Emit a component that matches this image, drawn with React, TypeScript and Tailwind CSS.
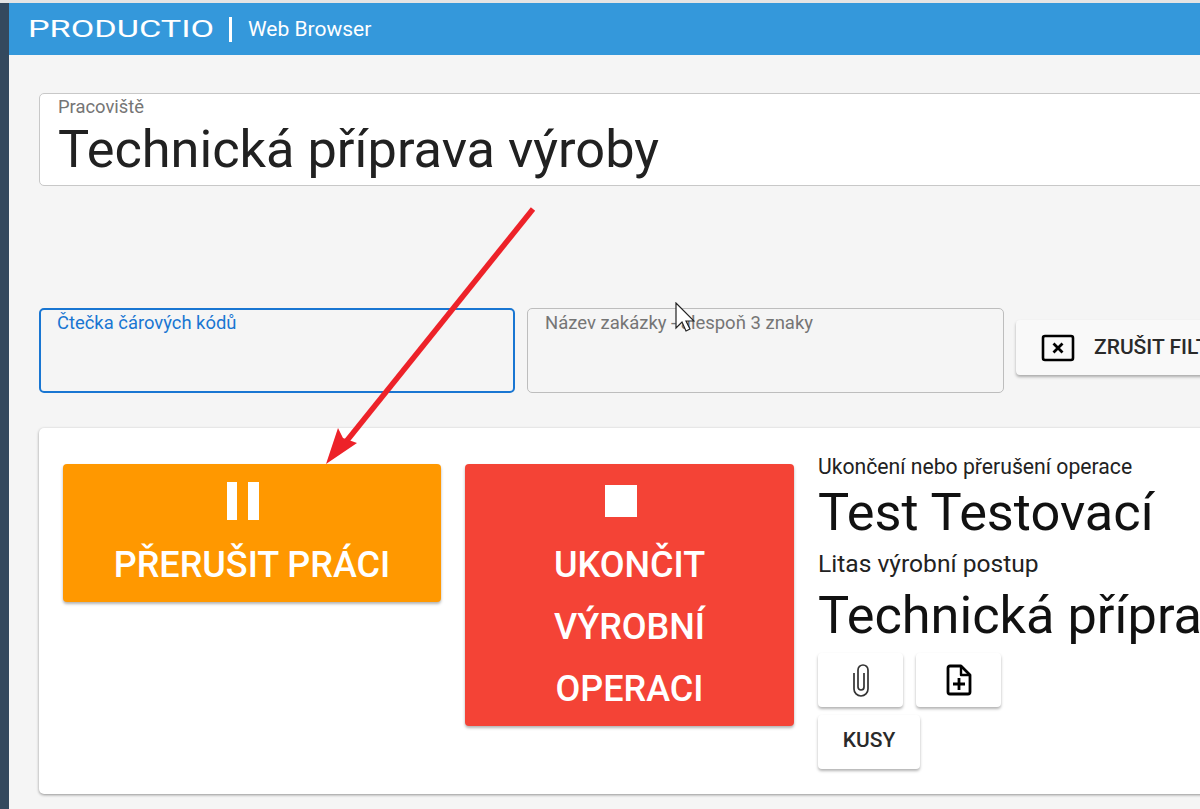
const shadow = 'shadow-[0_2px_3px_rgba(0,0,0,0.3)]';

function SmallButton({ children, className }: { children: React.ReactNode; className: string }) {
  return (
    <div className={`flex items-center justify-center rounded bg-white ${shadow} ${className}`}>
      {children}
    </div>
  );
}

export default function App() {
  return (
    <div className="relative h-[809px] w-[1200px] overflow-hidden bg-[#f5f5f5] font-[Roboto,sans-serif]">
      <div className="h-[3px] bg-[#e4e4e4]" />
      <div className="flex h-[806px]">
        {/* Sidebar */}
        <div className="w-[9px] shrink-0 bg-[#34495e]" />

        <div className="min-w-0 flex-1">
          {/* Header */}
          <header className="flex h-[52px] items-center bg-[#3498db] pl-[19px] text-white">
            <span className="w-[185px] origin-left scale-x-[1.49] text-[23px] leading-none whitespace-nowrap">PRODUCTIO</span>
            <div className="ml-4 h-[25px] w-[3px] bg-white" />
            <span className="ml-[16px] text-[21px] leading-none">Web Browser</span>
          </header>

          <main className="pl-[30px]">
            {/* Workplace */}
            <div className="mt-[38px] h-[93px] w-[1300px] rounded-[5px] border border-[#c8c8c8] bg-white pl-[18px]">
              <div className="pt-[3px] text-[18.4px] leading-[20px] text-[#757575]">Pracoviště</div>
              <div className="mt-[2px] text-[52.3px] leading-[60px] text-[#212121] whitespace-nowrap">Technická příprava výroby</div>
            </div>

            {/* Filters */}
            <div className="mt-[122px] flex w-[1300px] items-start gap-3">
              <div className="h-[85px] w-[476px] rounded-[5px] border-2 border-[#1976d2] bg-[#f5f5f5] pl-4 pt-[3px] text-[18.4px] leading-[20px] text-[#1976d2]">
                Čtečka čárových kódů
              </div>
              <div className="h-[85px] w-[477px] rounded-[5px] border border-[#bdbdbd] bg-[#f5f5f5] pl-[17px] pt-1 text-[18.5px] leading-[20px] text-[#757575]">
                Název zakázky - alespoň 3 znaky
              </div>
              <div className={`mt-3 flex h-[55px] w-[300px] items-center rounded bg-[#f9f9f9] pl-[25px] ${shadow}`}>
                <svg width="34" height="28" viewBox="0 0 34 28" fill="none" stroke="#000" strokeWidth="2.6">
                  <rect x="2" y="2" width="30" height="24" rx="2" />
                  <path d="M12.5 9.5l9 9M21.5 9.5l-9 9" strokeWidth="2.8" />
                </svg>
                <span className="ml-[19px] text-[21px] font-medium text-[#2a2a2a] whitespace-nowrap">ZRUŠIT FILTR</span>
              </div>
            </div>

            {/* Operation card */}
            <div className="mt-[35px] flex h-[366px] w-[1300px] items-start rounded-[5px] bg-white pl-6 pt-9 shadow-[0_1px_3px_rgba(0,0,0,0.4)]">
              <div className={`flex h-[138px] w-[378px] shrink-0 flex-col items-center rounded bg-[#ff9800] text-white ${shadow}`}>
                <div className="mt-[18px] -ml-[18px] flex h-[38px] gap-[11px]">
                  <div className="w-[10px] bg-white" />
                  <div className="w-[11px] bg-white" />
                </div>
                <div className="mt-[23px] text-[36px] font-medium leading-[44px] whitespace-nowrap">PŘERUŠIT PRÁCI</div>
              </div>

              <div className={`ml-6 flex h-[262px] w-[329px] shrink-0 flex-col items-center rounded bg-[#f44336] text-white ${shadow}`}>
                <div className="mt-[21px] -ml-[18px] h-[32px] w-[32px] bg-white" />
                <div className="mt-[17px] text-center text-[36px] font-medium leading-[62px]">
                  UKONČIT<br />VÝROBNÍ<br />OPERACI
                </div>
              </div>

              <div className="ml-6 -mt-[9px] min-w-0 flex-1 text-[#111]">
                <div className="text-[21.2px] leading-[24px] text-[#222]">Ukončení nebo přerušení operace</div>
                <div className="mt-[3px] text-[52.3px] leading-[60px] whitespace-nowrap">Test Testovací</div>
                <div className="mt-[10px] text-[24.6px] leading-[24px] text-[#222]">Litas výrobní postup</div>
                <div className="mt-[9px] text-[52.3px] leading-[60px] whitespace-nowrap">Technická příprava výroby</div>
                <div className="mt-[8px] flex gap-[13px]">
                  <SmallButton className="h-[54px] w-[85px]">
                    <svg width="18" height="34" viewBox="0 0 18 34" fill="none" stroke="#333" strokeWidth="1.7">
                      <path d="M12 10V24a3 3 0 0 1-6 0V7a5 5 0 0 1 10 0V26a7 7 0 0 1-14 0V10" />
                    </svg>
                  </SmallButton>
                  <SmallButton className="h-[54px] w-[85px]">
                    <svg width="26" height="32" viewBox="0 0 26 32" fill="none" stroke="#000" strokeWidth="2.8" strokeLinejoin="round">
                      <path d="M4 2h11l9 9v17a2 2 0 0 1-2 2H4a2 2 0 0 1-2-2V4a2 2 0 0 1 2-2z" />
                      <path d="M15 2v9h9" strokeWidth="2.4" />
                      <path d="M13 14v12M7 20h12" />
                    </svg>
                  </SmallButton>
                </div>
                <SmallButton className="mt-[8px] h-[54px] w-[102px] pb-[2px]">
                  <span className="text-[21px] font-medium text-[#2a2a2a]">KUSY</span>
                </SmallButton>
              </div>
            </div>
          </main>
        </div>
      </div>

      {/* Annotation arrow */}
      <svg className="pointer-events-none absolute left-0 top-0" width="1200" height="809" fill="none">
        <path d="M533 209L345 443" stroke="#ed2229" strokeWidth="5.5" />
        <path d="M326 464L338 428L343 438L357 443Z" fill="#ed2229" />
      </svg>

      {/* Mouse cursor */}
      <svg className="pointer-events-none absolute left-[675px] top-[302px]" width="20" height="30" viewBox="0 0 20 30">
        <path d="M1 1v25l6-6 4 9 4-2-4-8h8z" fill="#fff" stroke="#222" strokeWidth="1.2" />
      </svg>
    </div>
  );
}
